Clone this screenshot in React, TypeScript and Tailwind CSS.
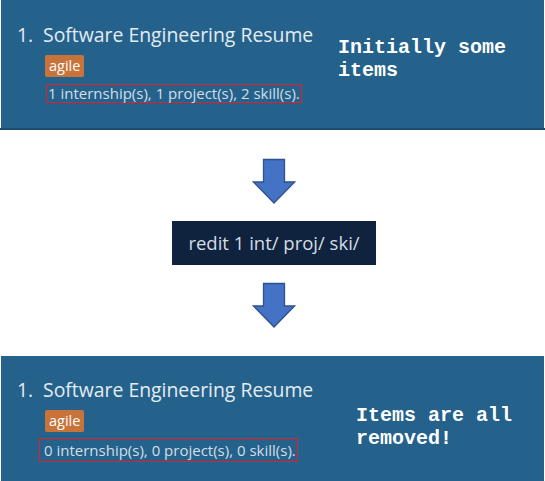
import React from "react";

const sans = { fontFamily: '"Open Sans", "Noto Sans", sans-serif' };

const Arrow: React.FC = () => (
  <svg width="44" height="46" viewBox="0 0 44 46" className="block">
    <polygon
      points="11.5,1.5 32.5,1.5 32.5,24 42.5,24 22,45 1.5,24 11.5,24"
      fill="#4472c4"
      stroke="#2f528f"
      strokeWidth="1.3"
    />
  </svg>
);

type CardProps = {
  counts: string;
  note: string[];
  boxClass: string;
  noteClass: string;
  top: string;
};

const ResumeCard: React.FC<CardProps> = ({ counts, note, boxClass, noteClass, top }) => (
  <div className={`ml-[1px] w-[543px] bg-[#25628b] flex ${top}`}>
    <div className="pl-[16px] w-[320px] shrink-0 flex flex-col items-start">
      <div className="flex text-[19.4px] leading-[26px] text-[#e4ecf2]" style={sans}>
        <span className="w-[26px]">1.</span>
        <span>Software Engineering Resume</span>
      </div>
      <div className="ml-[28px] mt-[7px] flex">
        <span
          className="bg-[#c8733a] text-white text-[14.5px] leading-[22px] px-[4px] rounded-[2px]"
          style={sans}
        >
          agile
        </span>
      </div>
      <div className={`flex border border-solid text-[15px] text-[#d3dee7] ${boxClass}`} style={sans}>
        <span>{counts}</span>
      </div>
    </div>
    <div
      className={`text-white font-bold text-[20px] leading-[23px] ${noteClass}`}
      style={{ fontFamily: '"Liberation Mono", "Courier New", monospace' }}
    >
      {note.map((l) => (
        <div key={l}>{l}</div>
      ))}
    </div>
  </div>
);

export default function App() {
  return (
    <div className="w-[545px] h-[481px] bg-white overflow-hidden">
      <div className="border-b-2 border-[#1c4c6d]">
        <ResumeCard
          top="h-[128px] pt-[22px]"
          counts="1 internship(s), 1 project(s), 2 skill(s)."
          note={["Initially some", "items"]}
          boxClass="ml-[29px] mt-[7px] h-[19px] items-center pl-[1px] pr-[1px] border-[#e3202a]"
          noteClass="pl-[17px] pt-[14px]"
        />
      </div>
      <div className="flex flex-col items-center">
        <div className="mt-[28px] ml-[3px]">
          <Arrow />
        </div>
        <div
          className="mt-[17px] ml-[3px] w-[204px] h-[44px] bg-[#0f223e] text-[#d5dde4] text-[18.5px] flex items-center justify-center"
          style={sans}
        >
          redit 1 int/ proj/ ski/
        </div>
        <div className="mt-[17px] ml-[3px]">
          <Arrow />
        </div>
      </div>
      <ResumeCard
        top="mt-[28px] h-[125px] pt-[21px]"
        counts="0 internship(s), 0 project(s), 0 skill(s)."
        note={["Items are all", "removed!"]}
        boxClass="ml-[22px] mt-[6px] h-[24px] items-center pl-[4px] pr-[1px] border-[#e3202a]"
        noteClass="pl-[35px] pt-[27px]"
      />
    </div>
  );
}
